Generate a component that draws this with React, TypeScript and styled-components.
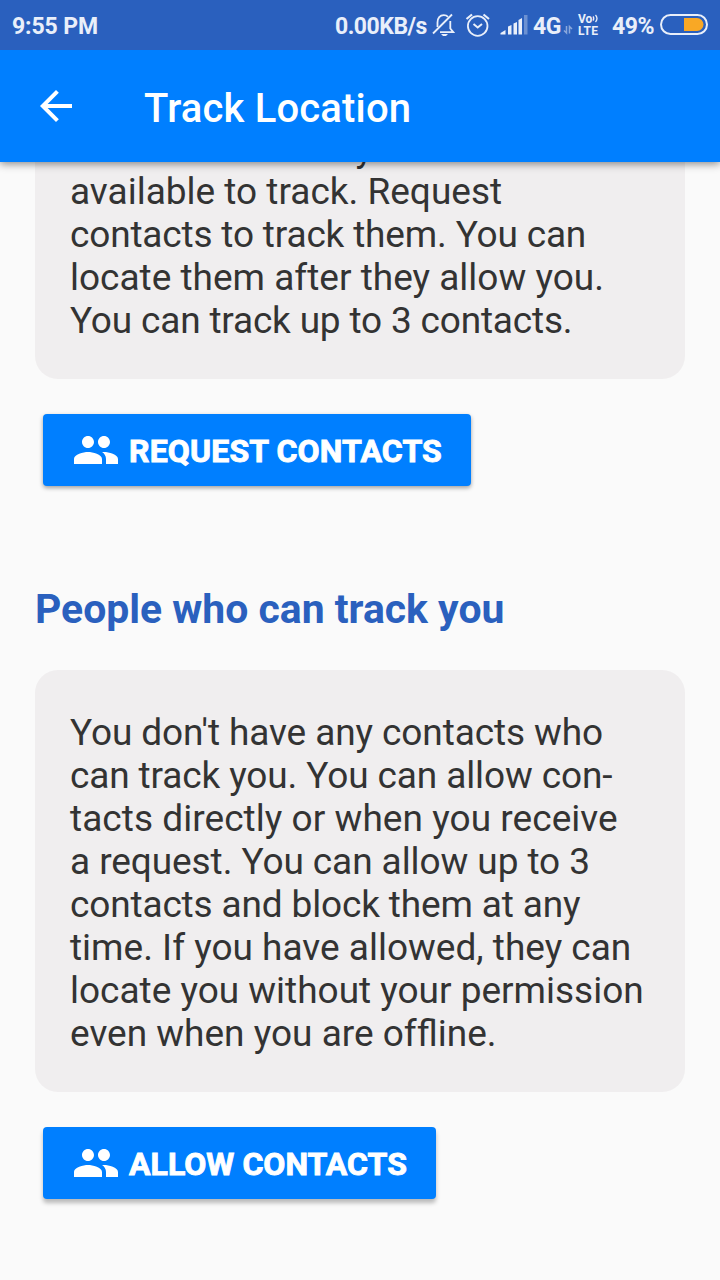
import React from "react";
import styled, { createGlobalStyle } from "styled-components";

const GlobalStyle = createGlobalStyle`
  * { box-sizing: border-box; }
  body { margin: 0; background: #fafafa; font-family: Roboto, sans-serif; }
  h1, h2, p { margin: 0; }
`;

const Screen = styled.div`
  width: 720px;
  height: 1280px;
  display: flex;
  flex-direction: column;
  overflow: hidden;
  background: #fafafa;
`;

const StatusBar = styled.div`
  flex: none;
  height: 50px;
  display: flex;
  align-items: center;
  padding: 2px 11px 0 12px;
  background: #2a60be;
  color: #e9effa;
  font-size: 23px;
  font-weight: 700;
  line-height: 27px;
  white-space: nowrap;
  z-index: 2;
`;

const StatusText = styled.span<{ $width: number; $tracking?: number }>`
  flex: none;
  width: ${(p) => p.$width}px;
  letter-spacing: ${(p) => p.$tracking ?? 0}px;
`;

const Clock = styled(StatusText)`
  margin-right: auto;
`;

const StatusIcons = styled.svg`
  flex: none;
  display: block;
  margin-top: -2px;
`;

const VolteLabel = styled.span`
  flex: none;
  width: 36px;
  display: flex;
  flex-direction: column;
  margin-top: -3px;
  padding-left: 2px;
  font-size: 12px;
  line-height: 12px;
`;

const VolteTop = styled.span`
  display: flex;
  align-items: center;
  height: 12px;
`;

const VolteBottom = styled.span`
  letter-spacing: 0.3px;
`;

const AppBar = styled.header`
  flex: none;
  height: 112px;
  display: flex;
  align-items: center;
  padding-left: 32px;
  background: #007fff;
  color: #fff;
  box-shadow: 0 2px 8px rgba(0, 0, 0, 0.45);
  z-index: 1;
`;

const BackButton = styled.button`
  width: 48px;
  height: 48px;
  margin-right: 64px;
  padding: 0;
  border: 0;
  background: none;
  color: inherit;
`;

const Title = styled.h1`
  font-size: 40px;
  font-weight: 500;
  line-height: 48px;
  letter-spacing: 0.17px;
  padding-top: 5px;
`;

const Content = styled.main`
  flex: 1;
  min-height: 0;
  overflow: hidden;
  display: flex;
  flex-direction: column;
  align-items: flex-start;
  padding: 0 35px;
`;

const Card = styled.section<{ $scrolled?: boolean }>`
  flex: none;
  width: 650px;
  margin-top: ${(p) => (p.$scrolled ? "-76px" : "0")};
  padding: 41px 35px 37px;
  border-radius: 23px;
  background: #f0eeef;
  color: #333;
  font-size: 37px;
  line-height: 43px;
  white-space: nowrap;
`;

const Line = styled.span<{ $tracking: number }>`
  display: block;
  letter-spacing: ${(p) => p.$tracking}px;
`;

const ContactsButton = styled.button<{ $width: number; $lift?: boolean }>`
  flex: none;
  width: ${(p) => p.$width}px;
  height: 72px;
  margin: 35px 0 0 8px;
  padding: 0 0 0 29px;
  display: flex;
  align-items: center;
  gap: 9px;
  border: 0;
  border-radius: 4px;
  background: #007fff;
  color: #fff;
  font: 700 32px/40px Roboto, sans-serif;
  letter-spacing: ${(p) => (p.$lift ? "0.04px" : "0.15px")};
  white-space: nowrap;
  box-shadow: ${(p) =>
    p.$lift ? "0 4px 4px rgba(0,0,0,.26)" : "0 2px 4px rgba(0,0,0,.36)"};
`;

const ButtonLabel = styled.span`
  padding-top: 2px;
  -webkit-text-stroke: 0.9px #fff;
`;

const Heading = styled.h2`
  flex: none;
  margin: 99px 0 37px;
  color: #2a60be;
  font-size: 40.9px;
  font-weight: 700;
  line-height: 48px;
`;

const PeopleIcon = () => (
  <svg width="48" height="48" viewBox="0 0 24 24" fill="currentColor">
    <path d="M16 11c1.66 0 2.99-1.34 2.99-3S17.66 5 16 5c-1.66 0-3 1.34-3 3s1.34 3 3 3zm-8 0c1.66 0 2.99-1.34 2.99-3S9.66 5 8 5C6.34 5 5 6.34 5 8s1.34 3 3 3zm0 2c-2.33 0-7 1.17-7 3.5V19h14v-2.500c0-2.330-4.670-3.500-7-3.500zm8 0c-.29 0-.62.02-.97.05 1.160.84 1.970 1.970 1.970 3.450V19h6v-2.500c0-2.330-4.670-3.500-7-3.500z" />
  </svg>
);

type TextLine = { text: string; tracking?: number };

const trackLines: TextLine[] = [
  { text: "You don't have any contacts", tracking: -0.1 },
  { text: "available to track. Request" },
  { text: "contacts to track them. You can", tracking: -0.17 },
  { text: "locate them after they allow you." },
  { text: "You can track up to 3 contacts.", tracking: -0.18 },
];

const allowLines: TextLine[] = [
  { text: "You don't have any contacts who", tracking: -0.1 },
  { text: "can track you. You can allow con-", tracking: -0.12 },
  { text: "tacts directly or when you receive", tracking: 0.05 },
  { text: "a request. You can allow up to 3", tracking: -0.08 },
  { text: "contacts and block them at any", tracking: -0.15 },
  { text: "time. If you have allowed, they can" },
  { text: "locate you without your permission", tracking: -0.01 },
  // The zero-width non-joiner keeps the first f apart from the fl ligature.
  { text: "even when you are of\u200cfline." },
];

const Message = ({ lines }: { lines: TextLine[] }) => (
  <p>
    {lines.map((l) => (
      <Line key={l.text} $tracking={l.tracking ?? 0}>
        {l.text}
      </Line>
    ))}
  </p>
);

export default function App() {
  return (
    <Screen>
      <GlobalStyle />
      <StatusBar>
        <Clock $width={90} $tracking={-0.1}>9:55 PM</Clock>
        <StatusText $width={97} $tracking={-0.5}>0.00KB/s</StatusText>
        <StatusIcons width="101" height="36" viewBox="432 7 101 36" fill="none" stroke="#e9effa">
          <path d="M437.500 27v-4.500c0-4.500 2.500-7.300 6.200-7.300q2.800 0 4.300 1.600M450.300 21v7.500l3 3.700H440" strokeWidth="1.800" />
          <path d="M433 33.500L452 14.500" strokeWidth="1.800" />
          <path d="M441 34h7l-2 2h-3z" fill="#e9effa" stroke="none" />
          <circle cx="477.700" cy="26" r="9.800" strokeWidth="1.800" />
          <path d="M466.500 19l5.500-4.500M489 19l-5.500-4.500" strokeWidth="2.200" />
          <path d="M473.500 24l4.200 3.500 4.300-3.500" strokeWidth="2" />
          <g fill="#e9effa" stroke="none">
            <path d="M500.500 34.500v-1.500l5-3V34.500zM508 26.500l3.500-1.500v9.500H508zM513.500 23.500l3.500-1.500v12.500h-3.500zM518.500 20l3.500-2v16.500h-3.500z" />
            <path d="M524 15h3.500v19.500H524z" opacity=".35" />
          </g>
        </StatusIcons>
        <StatusText $width={29} $tracking={-0.4}>4G</StatusText>
        <StatusIcons width="14" height="36" viewBox="562 7 14 36" fill="none" stroke="#e9effa" opacity=".5">
          <path d="M564 30.500l2.500 2.500v-7M569.500 33.500v-7l2.500 2.500" strokeWidth="1.500" />
        </StatusIcons>
        <VolteLabel>
          <VolteTop>
            Vo
            <svg width="7" height="9" viewBox="0 0 7 9" fill="none" stroke="currentColor" strokeWidth="1.300">
              <path d="M1 2.500q1.500 2 0 4M3.500 1q3 3.500 0 7" />
            </svg>
          </VolteTop>
          <VolteBottom>LTE</VolteBottom>
        </VolteLabel>
        <StatusText $width={48} $tracking={-0.5}>49%</StatusText>
        <StatusIcons width="49" height="24" viewBox="660 13 49 24">
          <rect x="661" y="15" width="46" height="19" rx="9.500" fill="none" stroke="#e9effa" strokeWidth="2" />
          <path d="M684 18h13a6.500 6.500 0 0 1 0 13h-13z" fill="#f9a825" />
        </StatusIcons>
      </StatusBar>
      <AppBar>
        <BackButton aria-label="Back">
          <svg width="48" height="48" viewBox="0 0 24 24" fill="currentColor">
            <path d="M20 11H7.830l5.590-5.590L12 4l-8 8 8 8 1.410-1.410L7.830 13H20v-2z" />
          </svg>
        </BackButton>
        <Title>Track Location</Title>
      </AppBar>
      <Content>
        <Card $scrolled>
          <Message lines={trackLines} />
        </Card>
        <ContactsButton $width={428}>
          <PeopleIcon />
          <ButtonLabel>REQUEST CONTACTS</ButtonLabel>
        </ContactsButton>
        <Heading>People who can track you</Heading>
        <Card>
          <Message lines={allowLines} />
        </Card>
        <ContactsButton $width={393} $lift>
          <PeopleIcon />
          <ButtonLabel>ALLOW CONTACTS</ButtonLabel>
        </ContactsButton>
      </Content>
    </Screen>
  );
}
